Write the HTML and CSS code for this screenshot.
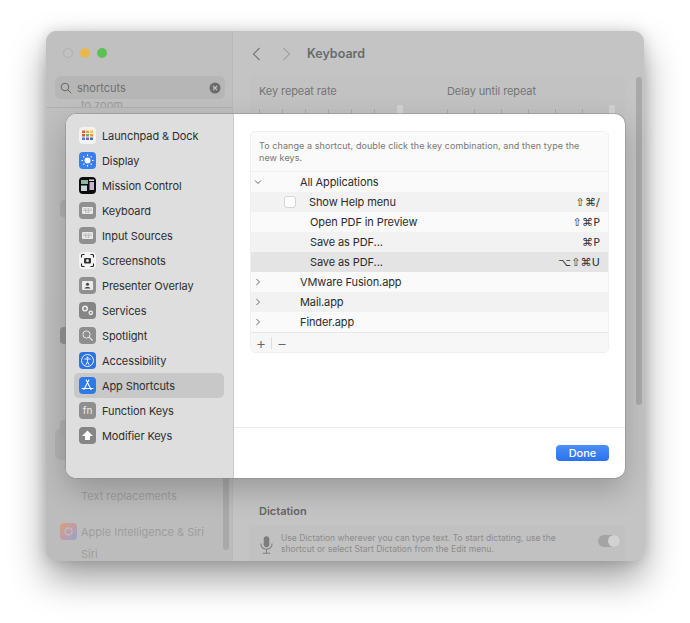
FILE: index.html
```html
<!DOCTYPE html>
<html lang="en">
<head>
<meta charset="utf-8">
<title>Keyboard</title>
<link rel="stylesheet" href="styles.css">
</head>
<body>
<div class="window">
  <aside class="win-side">
    <div class="lights"><i class="light l-off"></i><i class="light l-min"></i><i class="light l-max"></i></div>
    <div class="search">
      <svg class="search-ico" viewBox="0 0 12 12"><circle cx="5" cy="5" r="3.8"/><path d="M8 8l3.200 3.200"/></svg>
      <span class="search-text">shortcuts</span>
      <svg class="search-clear" viewBox="0 0 12 12"><circle cx="6" cy="6" r="5.500" fill="#6c6c6c"/><path d="M4 4l4 4M8 4l-4 4" stroke="#c4c4c4" stroke-width="1.100"/></svg>
    </div>
    <div class="side-clip"><span class="ghost-text g-zoom">to zoom</span></div>
    <div class="side-ghost">
      <i class="ghost-ico g1"></i><i class="ghost-ico g2"></i>
      <div class="ghost-sel"></div>
      <i class="ghost-ico g3"></i>
      <div class="ghost-text g-repl">Text replacements</div>
      <div class="ghost-ai"><svg class="ai-ico" viewBox="0 0 17 17"><defs><linearGradient id="aig" x1="0" y1="0" x2="1" y2="1"><stop offset="0" stop-color="#d2a47a"/><stop offset=".5" stop-color="#c39aa8"/><stop offset="1" stop-color="#8fa8cc"/></linearGradient></defs><rect width="17" height="17" rx="4" fill="url(#aig)"/><circle cx="8.500" cy="8.500" r="3.500" fill="none" stroke="#bbb" stroke-width="1.400"/></svg><span class="ghost-text">Apple Intelligence &amp; Siri</span></div>
      <div class="ghost-text g-siri">Siri</div>
    </div>
    <div class="side-scroll"></div>
  </aside>
  <main class="win-main">
    <header class="toolbar">
      <svg class="nav" viewBox="0 0 9 14"><path d="M7.500 1L1.500 7l6 6"/></svg>
      <svg class="nav nav-off" viewBox="0 0 9 14"><path d="M1.500 1l6 6-6 6"/></svg>
      <h1 class="win-title">Keyboard</h1>
    </header>
    <section class="rates">
      <div class="rate-labels"><span>Key repeat rate</span><span>Delay until repeat</span></div>
      <div class="sliders">
        <div class="ticks t-a"><i></i><i></i><i></i><i></i><i></i><i></i><i class="thumb"></i></div>
        <div class="ticks t-b"><i></i><i></i><i></i><i></i><i></i><i></i><i class="thumb"></i></div>
      </div>
    </section>
    <h2 class="dict-title">Dictation</h2>
    <section class="dict">
      <svg class="mic" viewBox="0 0 14 20"><rect x="4" y="0.500" width="6" height="12" rx="3" fill="#7d7d7d"/><path d="M1 8.500c0 3.800 2.600 6 6 6s6-2.200 6-6M7 14.500V19M3 19h8" fill="none" stroke="#7d7d7d" stroke-width="1.100"/></svg>
      <p class="dict-text">Use Dictation wherever you can type text. To start dictating, use the shortcut or select Start Dictation from the Edit menu.</p>
      <span class="toggle"><i></i></span>
    </section>
    <div class="main-scroll"></div>
  </main>
</div>

<div class="modal">
  <nav class="modal-side">
    <div class="nav-row"><svg class="ico" viewBox="0 0 17 17"><rect width="17" height="17" rx="4" fill="#f4f4f4"/><g><rect x="3" y="3.500" width="3" height="2.500" fill="#e8584a"/><rect x="7" y="3.500" width="3" height="2.500" fill="#f0a33a"/><rect x="11" y="3.500" width="3" height="2.500" fill="#f4c842"/><rect x="3" y="7" width="3" height="2.500" fill="#e0513f"/><rect x="7" y="7" width="3" height="2.500" fill="#58b85c"/><rect x="11" y="7" width="3" height="2.500" fill="#e89a3a"/><rect x="3" y="10.500" width="3" height="2.500" fill="#4b7fdc"/><rect x="7" y="10.500" width="3" height="2.500" fill="#8a5cc8"/><rect x="11" y="10.500" width="3" height="2.500" fill="#3f6fd0"/></g></svg><span>Launchpad &amp; Dock</span></div>
    <div class="nav-row"><svg class="ico" viewBox="0 0 17 17"><rect width="17" height="17" rx="4" fill="#3a7ff0"/><circle cx="8.500" cy="8.500" r="3" fill="#fff"/><path d="M8.500 2.500v1.500M8.500 13v1.500M2.500 8.500H4M13 8.500h1.500M4.300 4.300l1 1M11.700 11.700l1 1M12.700 4.300l-1 1M5.300 11.700l-1 1" stroke="#fff" stroke-width="1.100"/></svg><span>Display</span></div>
    <div class="nav-row"><svg class="ico" viewBox="0 0 17 17"><rect width="17" height="17" rx="4" fill="#0c0c0c"/><rect x="2" y="3" width="7" height="4" fill="#8fb59a"/><rect x="2" y="8.500" width="6" height="5.500" fill="#c8d2d8"/><rect x="10.500" y="5" width="4.500" height="8" fill="#c7b3d4"/><rect x="10" y="2.500" width="5" height="1.500" fill="#ddd"/></svg><span>Mission Control</span></div>
    <div class="nav-row"><svg class="ico" viewBox="0 0 17 17"><rect width="17" height="17" rx="4" fill="#909090"/><rect x="3" y="5" width="11" height="7" rx="1" fill="#e9e9e9"/><path d="M4.500 7h8M4.500 8.500h8M6 10.200h5" stroke="#8c8c8c" stroke-width=".7" stroke-dasharray="1 .5"/></svg><span>Keyboard</span></div>
    <div class="nav-row"><svg class="ico" viewBox="0 0 17 17"><rect width="17" height="17" rx="4" fill="#909090"/><rect x="3" y="5" width="11" height="7" rx="1" fill="#e9e9e9"/><path d="M4.500 7h8M4.500 8.500h8M6 10.200h5" stroke="#8c8c8c" stroke-width=".7" stroke-dasharray="1 .5"/></svg><span>Input Sources</span></div>
    <div class="nav-row"><svg class="ico" viewBox="0 0 17 17"><rect width="17" height="17" rx="4" fill="#f4f4f4"/><path d="M2.500 5.500V3.500a1 1 0 0 1 1-1h2M11.500 2.500h2a1 1 0 0 1 1 1v2M14.500 11.500v2a1 1 0 0 1-1 1h-2M5.500 14.500h-2a1 1 0 0 1-1-1v-2" fill="none" stroke="#222" stroke-width="1.100"/><rect x="5" y="6" width="7" height="5.500" rx="1" fill="#333"/><circle cx="8.500" cy="8.700" r="1.400" fill="#eee"/></svg><span>Screenshots</span></div>
    <div class="nav-row"><svg class="ico" viewBox="0 0 17 17"><rect width="17" height="17" rx="4" fill="#909090"/><rect x="3" y="4" width="11" height="9" rx="1" fill="#ececec"/><circle cx="8.500" cy="7.200" r="1.500" fill="#444"/><path d="M5.500 11.500c.3-2 5.700-2 6 0z" fill="#444"/></svg><span>Presenter Overlay</span></div>
    <div class="nav-row"><svg class="ico" viewBox="0 0 17 17"><rect width="17" height="17" rx="4" fill="#858585"/><circle cx="6" cy="6.500" r="2.300" fill="none" stroke="#eee" stroke-width="1.500"/><circle cx="11.800" cy="10.800" r="1.700" fill="none" stroke="#eee" stroke-width="1.300"/></svg><span>Services</span></div>
    <div class="nav-row"><svg class="ico" viewBox="0 0 17 17"><rect width="17" height="17" rx="4" fill="#8e8e8e"/><circle cx="7.500" cy="7.500" r="3.600" fill="none" stroke="#e8e8e8" stroke-width="1"/><path d="M10.200 10.200l3.300 3.300" stroke="#e8e8e8" stroke-width="1.200"/></svg><span>Spotlight</span></div>
    <div class="nav-row"><svg class="ico" viewBox="0 0 17 17"><rect width="17" height="17" rx="4" fill="#2c74e6"/><circle cx="8.500" cy="8.500" r="6" fill="none" stroke="#fff" stroke-width=".9"/><circle cx="8.500" cy="5.400" r="1" fill="#fff"/><path d="M5.200 7h6.600M8.500 7v2.800M8.500 9.800l-1.700 3M8.500 9.800l1.700 3" fill="none" stroke="#fff" stroke-width=".9"/></svg><span>Accessibility</span></div>
    <div class="nav-row is-sel"><svg class="ico" viewBox="0 0 17 17"><rect width="17" height="17" rx="4" fill="#2f7ae8"/><path d="M9.800 3L5 12.500M7.200 3l4.800 9.500M3 11.500h11" fill="none" stroke="#fff" stroke-width="1.100" stroke-linecap="round"/></svg><span>App Shortcuts</span></div>
    <div class="nav-row"><svg class="ico" viewBox="0 0 17 17"><rect width="17" height="17" rx="4" fill="#8e8e8e"/><text class="fn" x="8.500" y="12" text-anchor="middle">fn</text></svg><span>Function Keys</span></div>
    <div class="nav-row"><svg class="ico" viewBox="0 0 17 17"><rect width="17" height="17" rx="4" fill="#858585"/><path d="M8.500 3.500l5.500 5.500h-3v4H6V9H3z" fill="#fff"/></svg><span>Modifier Keys</span></div>
  </nav>
  <div class="modal-main">
    <div class="modal-body">
      <div class="table">
        <p class="hint">To change a shortcut, double click the key combination, and then type the new keys.</p>
        <div class="row r-top"><svg class="chev" viewBox="0 0 8 8"><path d="M1 2.500l3 3 3-3"/></svg><span class="app">All Applications</span></div>
        <div class="row r-alt"><span class="check"></span><span class="cmd-a">Show Help menu</span><span class="keys">⇧⌘/</span></div>
        <div class="row"><span class="cmd">Open PDF in Preview</span><span class="keys">⇧⌘P</span></div>
        <div class="row r-alt"><span class="cmd">Save as PDF...</span><span class="keys">⌘P</span></div>
        <div class="row r-dark"><span class="cmd">Save as PDF...</span><span class="keys">⌥⇧⌘U</span></div>
        <div class="row"><svg class="chev" viewBox="0 0 8 8"><path d="M2.500 1l3 3-3 3"/></svg><span class="app">VMware Fusion.app</span></div>
        <div class="row r-alt"><svg class="chev" viewBox="0 0 8 8"><path d="M2.500 1l3 3-3 3"/></svg><span class="app">Mail.app</span></div>
        <div class="row"><svg class="chev" viewBox="0 0 8 8"><path d="M2.500 1l3 3-3 3"/></svg><span class="app">Finder.app</span></div>
        <div class="tools"><span class="tool">+</span><span class="tool-sep"></span><span class="tool">−</span></div>
      </div>
    </div>
    <footer class="modal-foot"><button class="done" type="button">Done</button></footer>
  </div>
</div>
</body>
</html>
```

FILE: styles.css
```css
* { box-sizing: border-box; }
html, body { margin: 0; height: 100%; background: #fff; overflow: hidden; }
body { font-family: Inter, "Liberation Sans", sans-serif; color: #2b2b2b; }

/* background window */
.window {
  position: absolute; left: 46px; top: 31px; width: 598px; height: 530px;
  display: flex; overflow: hidden; border-radius: 11px; background: #c4c4c4;
  box-shadow: 0 18px 36px rgba(0,0,0,.38), 0 0 14px rgba(0,0,0,.14);
}
.win-side { width: 187px; flex: none; background: linear-gradient(#c0c0c0, #bcbcbc); border-right: 1px solid #b8b8b8; padding: 0 9px; position: relative; overflow: hidden; }
.lights { display: flex; gap: 7px; padding: 17px 0 0 8px; height: 45px; }
.light { width: 10px; height: 10px; border-radius: 50%; }
.l-off { background: #c2c2c2; border: 1px solid #b0b0b0; }
.l-min { background: #e8b84a; }
.l-max { background: #5cc055; }
.search { height: 23px; width: 170px; background: #b6b6b6; border-radius: 6px; display: flex; align-items: center; padding: 0 3px 0 5px; }
.search-ico { width: 12px; height: 12px; fill: none; stroke: #666; stroke-width: 1; flex: none; }
.search-text { margin-left: 5px; font-size: 11px; color: #707070; flex: 1; }
.search-clear { width: 12px; height: 12px; margin-right: 1px; flex: none; }
.side-clip { height: 9px; margin: 0 -9px; overflow: hidden; border-bottom: 1px solid #b0b0b0; position: relative; }
.g-zoom { position: absolute; left: 35px; top: -1px; }
.side-ghost { position: relative; height: 454px; }
.ghost-ico { position: absolute; left: 5px; width: 17px; height: 17px; border-radius: 4px; background: #b0b0b0; }
.g1 { top: 92px; }
.g2 { top: 219px; background: #939393; }
.g3 { top: 312px; }
.ghost-sel { position: absolute; left: 0; top: 320px; width: 168px; height: 32px; background: #b2b2b2; border-radius: 6px; }
.ghost-text { font-size: 11px; color: #9d9d9d; }
.g-repl { position: absolute; left: 26px; top: 381px; }
.ghost-ai { position: absolute; left: 5px; top: 415px; display: flex; align-items: center; gap: 4px; }
.ai-ico { width: 17px; height: 17px; }
.g-siri { position: absolute; left: 26px; top: 439px; }
.side-scroll { position: absolute; right: 3px; top: 430px; width: 6px; height: 89px; border-radius: 3px; background: #a9a9a9; }

.win-main { flex: 1; padding: 0 25px 0 16px; position: relative; }
.toolbar { display: flex; align-items: center; height: 45px; }
.nav { width: 9px; height: 14px; fill: none; stroke: #777; stroke-width: 1.200; margin-left: 3px; margin-right: 21px; }
.nav-off { stroke: #a3a3a3; margin-left: 0; margin-right: 16px; }
.win-title { margin: 0; font-size: 12.500px; font-weight: 600; color: #6a6a6a; }
.rates { height: 58px; margin-right: -4px; background: #c2c2c2; border-radius: 6px 6px 0 0; padding: 8px 10px; }
.rate-labels { display: flex; gap: 95px; font-size: 11px; letter-spacing: -.1px; color: #757575; }
.rate-labels span:first-child { width: 93px; }
.sliders { display: flex; gap: 44px; margin-top: 10px; }
.ticks { height: 7px; display: flex; justify-content: space-between; align-items: flex-end; }
.t-a { width: 144px; }
.t-b { width: 168px; }
.ticks i { width: 1px; height: 6px; background: #aaa; }
.ticks i.thumb { width: 6px; height: 10px; margin-top: -3px; border-radius: 2px 2px 0 0; background: #d2d2d2; }
.dict-title { margin: 370px 0 0 10px; font-size: 11px; font-weight: 600; color: #666; }
.dict { display: flex; align-items: flex-start; height: 50px; margin: 7px -4px 0 0; background: #c1c1c1; padding: 8px 11px; gap: 8px; position: relative; }
.mic { width: 13px; height: 20px; flex: none; margin-top: 2px; }
.dict-text { margin: 0; width: 285px; font-size: 8.500px; line-height: 11px; color: #8c8c8c; letter-spacing: .03px; }
.toggle { position: absolute; right: 5px; top: 10px; width: 22px; height: 12px; border-radius: 6px; background: #a4a4a4; }
.toggle i { position: absolute; right: 0; top: 0; width: 12px; height: 12px; border-radius: 50%; background: #d2d2d2; }
.main-scroll { position: absolute; right: 4px; top: 46px; width: 6px; height: 328px; border-radius: 3px; background: #a9a9a9; }

/* modal sheet */
.modal {
  position: absolute; left: 66px; top: 114px; width: 559px; height: 364px;
  display: flex; border-radius: 10px; overflow: hidden; background: #fff;
  box-shadow: 0 0 0 .5px #8a8a8a, 0 12px 30px rgba(0,0,0,.22);
}
.modal-side { width: 168px; flex: none; background: #dedede; border-right: 1px solid #c9c9c9; padding: 9px 9px 0 8px; }
.nav-row { height: 25px; display: flex; align-items: center; gap: 6px; padding-left: 5px; font-size: 11px; letter-spacing: -.1px; color: #2e2e2e; border-radius: 5px; }
.is-sel { background: #c8c8c8; }
.ico { width: 17px; height: 17px; flex: none; }
.fn { font-family: Inter, sans-serif; font-size: 10px; fill: #ededed; }

.modal-main { flex: 1; display: flex; flex-direction: column; }
.modal-body { height: 314px; padding: 17px 16px 0; border-bottom: 1px solid #ececec; }
.table { background: #fafafa; border: 1px solid #efefef; border-radius: 5px; overflow: hidden; height: 222px; }
.hint { margin: 0; height: 40px; padding: 8px 8px 0; font-size: 9px; line-height: 12px; color: #777; letter-spacing: .08px; border-bottom: 1px solid #eee; }
.row { height: 20px; display: flex; align-items: center; position: relative; padding-right: 8px; font-size: 11px; letter-spacing: -.1px; color: #2b2b2b; }
.r-alt { background: #f2f2f2; }
.r-dark { background: #e4e4e4; }
.chev { position: absolute; left: 3px; top: 6px; width: 8px; height: 8px; fill: none; stroke: #666; stroke-width: 1; }
.app { margin-left: 49px; }
.check { width: 12px; height: 12px; margin-left: 33px; background: #fff; border: 1px solid #d4d4d4; border-radius: 3px; flex: none; }
.cmd-a { margin-left: 13px; }
.cmd { margin-left: 59px; }
.keys { margin-left: auto; font-size: 11px; font-family: "DejaVu Sans", sans-serif; letter-spacing: .2px; color: #333; }
.tools { height: 20px; background: #f7f7f7; border-top: 1px solid #e6e6e6; display: flex; align-items: center; color: #666; font-size: 16px; }
.tool { width: 20px; text-align: center; font-weight: 300; }
.tool-sep { width: 1px; height: 12px; background: #ddd; }
.modal-foot { flex: 1; display: flex; justify-content: flex-end; padding: 17px 16px 0; }
.done { width: 53px; height: 16px; padding: 0; border: 0; border-radius: 4px; background: linear-gradient(#4c8ffa, #2a72ee); color: #fff; font: 500 11px Inter, sans-serif; }
```
